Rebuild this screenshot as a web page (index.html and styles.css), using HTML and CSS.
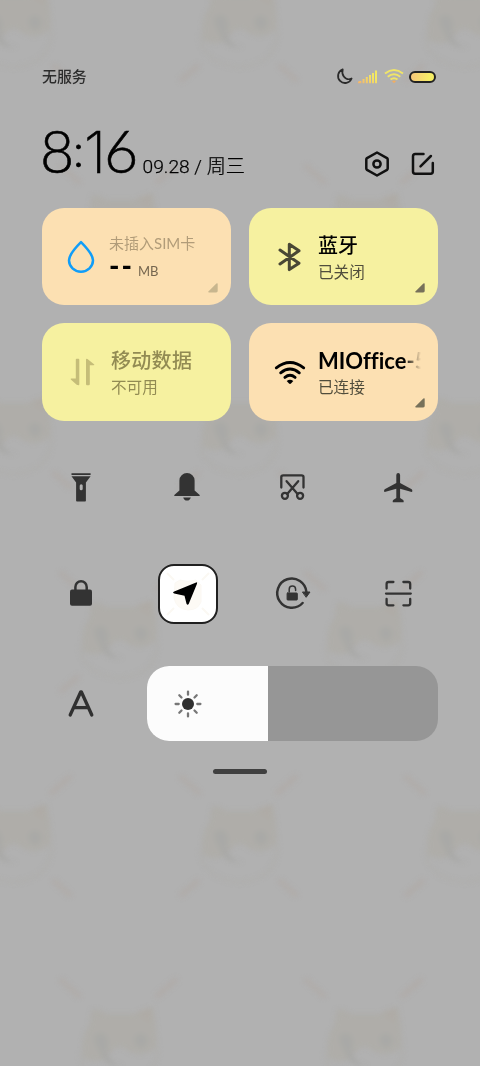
FILE: index.html
```html
<!DOCTYPE html>
<html lang="zh-CN">
<head>
<meta charset="utf-8">
<title>控制中心</title>
<link rel="stylesheet" href="styles.css">
</head>
<body>
<svg class="wallpaper" viewBox="0 0 480 1066" aria-hidden="true">
  <defs>
    <g id="cat">
      <path class="fur" d="M-28-34Q-20-34-14-29H14Q24-35 33-36Q37-15 37 4Q22 16 8 8Q0 0-8 8Q-20 24-37 15Q-40-6-31-17Z"/>
      <path class="chin" d="M-40 10Q-37 40 0 42Q36 40 38 5"/>
      <path class="ear" d="M17-29L31-35V-20Z"/>
      <path class="eye" d="M-25-7Q-18-13-13-5L-12 12Q-8 22 4 22Q-17 25-20 8Q-26 0-25-7ZM15-6Q21-12 27-5Q27 3 21 5Q14 2 15-6Z"/>
      <path class="rays" d="M-60-64L-40-46M57-64L36-46M-60 56L-41 40M57 56L39 40"/>
    </g>
    <g id="row-a"><use href="#cat" x="14"/><use href="#cat" x="240"/><use href="#cat" x="465"/></g>
    <g id="row-b"><use href="#cat" x="120"/><use href="#cat" x="365"/></g>
  </defs>
  <g class="cats">
    <use href="#row-a" y="25"/><use href="#row-b" y="229"/><use href="#row-a" y="432"/>
    <use href="#row-b" y="636"/><use href="#row-a" y="840"/><use href="#row-b" y="1043"/>
  </g>
</svg>
<main class="panel">
  <div class="status">
    <span class="carrier">无服务</span>
    <div class="status-icons">
      <svg class="moon" width="17" height="17" viewBox="0 0 17 17"><path d="M6.7 1.4A7 7 0 1 0 15.6 10.5C12.7 12 9.5 11 7.8 8.6C6.3 6.4 6 3.6 6.7 1.4Z"/></svg>
      <svg class="signal" width="20" height="14" viewBox="0 0 20 14">
        <defs><linearGradient id="warm" x1="0" y1="1" x2="1" y2="0"><stop offset="0" stop-color="#f5b36c"/><stop offset=".65" stop-color="#f3e862"/></linearGradient></defs>
        <path fill="url(#warm)" d="M1 11h2.3v2.2H0V12ZM4.5 9h2v4.2h-2ZM7.8 7h2v6.2h-2ZM11 5h2v8.2h-2ZM14 3h2v10.2h-2ZM17 .5h2v12.7h-2Z"/>
      </svg>
      <svg class="wifi-small" width="20" height="15" viewBox="0 0 20 15"><path d="M1 4.5Q10-2.5 19 4.5M3.7 7.7Q10 2.7 16.3 7.7M6.5 10.5Q10 7.8 13.5 10.5"/><path class="wifi-dot" d="M7.9 12.1Q10 10.7 12.1 12.1L10 14.3Z"/></svg>
      <span class="battery"></span>
    </div>
  </div>

  <header class="header">
    <div class="clock">
      <span class="time"><span class="eight">8</span><span class="colon">:</span><span class="one">1</span><span class="six">6</span></span>
      <span class="date">09.28 / 周三</span>
    </div>
    <div class="actions">
      <svg width="26" height="28" viewBox="0 0 26 28"><path d="M13 2.5L23 8.1Q23.7 8.6 23.7 9.4V18.6Q23.7 19.4 23 19.9L13 25.5L3 19.9Q2.3 19.4 2.3 18.6V9.4Q2.3 8.6 3 8.1Z"/><circle cx="13" cy="14" r="3.6"/></svg>
      <svg width="24" height="24" viewBox="0 0 24 24"><path d="M12.5 2.1H4.2Q2 2.1 2 4.3V19.6Q2 21.8 4.2 21.8H19.6Q21.8 21.8 21.8 19.6V11M19.9 4L9.5 14.3"/></svg>
    </div>
  </header>

  <section class="tiles">
    <article class="tile peach sim">
      <svg class="tile-icon" width="40" height="40" viewBox="0 0 40 40"><path class="drop" d="M20 5.2Q8 17.2 8 23.3A12 11.4 0 0 0 32 23.3Q32 17.2 20 5.2Z"/></svg>
      <div class="copy"><div class="title">未插入SIM卡</div><div class="usage"><b>--</b><small>MB</small></div></div>
      <svg class="corner" width="10" height="10" viewBox="0 0 10 10"><path d="M8.4.4Q9.7-.2 9.7 1V8Q9.7 9.4 8.2 9.4H1Q-.3 9.2.6 8.2Z"/></svg>
    </article>
    <article class="tile yellow bluetooth">
      <svg class="tile-icon" width="40" height="40" viewBox="0 0 40 40"><path class="bt" d="M10 13.1L29 26.2L19.3 32.6V7.2L29 13.8L10 27"/></svg>
      <div class="copy"><div class="title">蓝牙</div><div class="subtitle">已关闭</div></div>
      <svg class="corner" width="10" height="10" viewBox="0 0 10 10"><path d="M8.4.4Q9.7-.2 9.7 1V8Q9.7 9.4 8.2 9.4H1Q-.3 9.2.6 8.2Z"/></svg>
    </article>
    <article class="tile yellow mobile">
      <svg class="tile-icon" width="40" height="40" viewBox="0 0 40 40"><path class="data" d="M14.8 7.6Q14.8 6.8 15.6 6.8H17.4Q18.3 6.8 18.3 7.8V32.3Q18.3 33.8 16.8 33H16L9.8 27.6Q9.2 26.5 10.5 26.5H14.8ZM25 7.5Q25.2 6.2 26.5 7L33 12.2Q34 13.3 32.5 13.3H28.8V32Q28.8 33.2 27.8 33.2H26Q25 33.2 25 32Z"/></svg>
      <div class="copy"><div class="title">移动数据</div><div class="subtitle">不可用</div></div>
    </article>
    <article class="tile peach wlan">
      <svg class="tile-icon" width="40" height="40" viewBox="0 0 40 40"><path class="wifi" d="M6.3 15.8Q20 5.2 33.7 15.8M10.7 20.8Q20 13.4 29.3 20.8M14.9 25.4Q20 21.3 25.1 25.4"/><path d="M16.7 28.9Q20 26.4 23.3 28.9L21 31.6Q20 32.5 19 31.6Z"/></svg>
      <div class="copy"><div class="title network">MIOffice-5G</div><div class="subtitle">已连接</div></div>
      <svg class="corner" width="10" height="10" viewBox="0 0 10 10"><path d="M8.4.4Q9.7-.2 9.7 1V8Q9.7 9.4 8.2 9.4H1Q-.3 9.2.6 8.2Z"/></svg>
    </article>
  </section>

  <section class="toggles">
    <button class="toggle" aria-label="手电筒"><svg width="36" height="36" viewBox="0 0 36 36"><path d="M8.5 3.2H27.6V5H8.5ZM8.5 6.3H27.6L22.9 12.4V30.7Q22.9 31.5 22.1 31.5H14Q13.1 31.5 13.1 30.7V12.4Z"/><rect class="hole" x="16.7" y="14.2" width="3" height="6" rx="1.5"/></svg></button>
    <button class="toggle" aria-label="静音"><svg width="36" height="36" viewBox="0 0 36 36"><path d="M10.4 20.5V10.5A7.6 7.4 0 0 1 25.6 10.5V20.5L30.7 24.9Q31 26.1 30 26.1H6Q5 26.1 5.3 24.9ZM14.2 27.5H21.8Q21 30.6 18 30.6Q15 30.6 14.2 27.5Z"/></svg></button>
    <button class="toggle" aria-label="截屏"><svg class="line" width="36" height="36" viewBox="0 0 36 36"><path d="M7.3 17.5V7Q7.3 5.3 9.3 5.3H27.5Q29.5 5.3 29.5 7V17.5M12.6 11.2L23.6 24M24.2 11.2L13.2 24"/><circle cx="10.9" cy="25.8" r="3"/><circle cx="26.1" cy="25.8" r="3"/></svg></button>
    <button class="toggle" aria-label="飞行模式"><svg width="36" height="36" viewBox="0 0 36 36"><path d="M16.3 5Q16.4 3 18.2 3Q20 3 20.1 5V13L31.7 19.3Q32.6 20.2 32.3 21.6L31.7 22L20.1 18.8V28L23.2 30Q24 31 23.6 32.2H12.8Q12.4 31 13.2 30L16.3 28V18.8L4.7 22L4.1 21.6Q3.8 20.2 4.7 19.3L16.3 13Z"/></svg></button>
    <button class="toggle" aria-label="锁屏"><svg width="36" height="36" viewBox="0 0 36 36"><path d="M12.4 14V11A5.6 5.7 0 0 1 23.7 11V14" fill="none" stroke="#333" stroke-width="2.5"/><rect x="7" y="13.4" width="22" height="16.3" rx="2"/></svg></button>
    <button class="toggle active" aria-label="位置信息"><svg width="56" height="56" viewBox="2 2 56 56"><g class="mini-cat"><path d="M17 19L22 16Q29 19 38 16L43 21V38Q40 46 30 46Q18 45 16 34Z"/><path class="mini-rays" d="M9 9L16 16M51 9L44 16M9 51L16 44M51 51L44 44"/></g><path class="arrow" d="M37.5 18.7Q40 17.2 38.8 20.2L30.8 39.7Q29.6 41.9 28.5 39.7L26.5 31.7L16.2 29.5Q14 28.5 16.2 27.4Z"/></svg></button>
    <button class="toggle" aria-label="方向锁定"><svg class="line ring" width="36" height="36" viewBox="0 0 36 36"><path d="M28.6 27A14.6 14.6 0 1 1 32.4 16"/><path class="solid" d="M28.8 16H36L32.4 21Z"/><rect class="solid" x="13.1" y="17" width="10.2" height="7" rx=".6"/><path class="thin" d="M15.2 16V13.3A3.2 3.2 0 0 1 21.6 13.3V14.4"/></svg></button>
    <button class="toggle" aria-label="扫一扫"><svg class="line" width="36" height="36" viewBox="0 0 36 36"><path d="M6.6 12.6V8Q6.6 6 8.6 6H13.4M23.4 6H28.2Q30.2 6 30.2 8V12.6M6.6 23V27.3Q6.6 29.3 8.6 29.3H13.4M23.4 29.3H28.2Q30.2 29.3 30.2 27.3V23M6 17.6H30.8"/></svg></button>
  </section>

  <section class="brightness">
    <svg class="auto" width="28" height="30" viewBox="0 0 28 30"><path d="M3.2 26L13.8 2.8H14.3L24.8 26M6.8 18.6H21.2"/></svg>
    <div class="slider"><div class="fill">
      <svg width="30" height="30" viewBox="0 0 30 30"><circle cx="15" cy="15" r="6"/><path d="M15 2.6V5.7M15 24.3V27.4M2.6 15H5.7M24.3 15H27.4M6.3 6.3L8.5 8.5M21.5 21.5L23.7 23.7M6.3 23.7L8.5 21.5M21.5 8.5L23.7 6.3"/></svg>
    </div></div>
  </section>
  <div class="handle"></div>
</main>
</body>
</html>
```
FILE: styles.css
```css
* { box-sizing: border-box; }
body {
  margin: 0;
  width: 480px;
  height: 1066px;
  overflow: hidden;
  position: relative;
  background: #b1b1b1;
  color: #000;
  font-family: Lato, "Noto Sans CJK SC", sans-serif;
}
svg { display: block; flex: none; }
.wallpaper { position: absolute; inset: 0; width: 480px; height: 1066px; }
.cats { filter: blur(2.6px); opacity: .72; }
.fur { fill: #aeaca6; }
.ear { fill: #aea9a2; }
.chin { fill: none; stroke: #aeada9; stroke-width: 2; }
.eye { fill: #a6a6a3; }
.rays { fill: none; stroke: #b0aaa6; stroke-width: 5; }
.panel {
  position: relative;
  display: flex;
  flex-direction: column;
  height: 1066px;
  padding: 64px 42px 0;
}
.status { display: flex; justify-content: space-between; align-items: center; height: 24px; }
.carrier { font: 500 14.9px/24px "Noto Sans CJK SC", sans-serif; color: #2c2c2c; }
.status-icons { display: flex; align-items: center; gap: 5px; padding: 1px 2.5px 0 0; }
.moon { fill: none; stroke: #2b2b2b; stroke-width: 1.8; stroke-linejoin: round; }
.signal { margin-right: 1px; }
.wifi-small { fill: none; stroke: #f1e568; stroke-width: 1.9; }
.wifi-small .wifi-dot { fill: #f3ad60; stroke: none; }
.battery {
  width: 27px;
  height: 12px;
  border: 2px solid #222;
  border-radius: 6px;
  background: linear-gradient(100deg, #f8c77b, #f5ed66 80%);
}
.header { display: flex; justify-content: space-between; height: 119.5px; }
.clock { display: flex; align-items: baseline; height: 82px; padding-top: 28px; }
.time { display: flex; align-items: baseline; height: 70px; font: 200 58px/70px Inter, sans-serif; -webkit-text-stroke: .6px #000; }
.eight { width: 34px; font-family: Lato, sans-serif; font-weight: 300; font-size: 59px; margin-left: -2px; }
.colon { width: 10px; font: 300 46px/60px Lato, sans-serif; transform: translate(-1px, -6px); }
.one { width: 20px; }
.six { width: 34px; font-family: Lato, sans-serif; font-weight: 300; font-size: 59px; }
.date { margin-left: 4.5px; font: 300 19.2px/28px Roboto, "Noto Sans CJK SC", sans-serif; -webkit-text-stroke: .25px #000; white-space: nowrap; }
.actions { display: flex; align-items: center; gap: 21px; height: 28px; margin: 61.5px 3px 0 0; }
.actions svg { fill: none; stroke: #111; stroke-width: 2.5; stroke-linejoin: round; stroke-linecap: round; }
.tiles { display: grid; grid-template-columns: 189px 189px; grid-auto-rows: 97.5px; gap: 18px; }
.tile { position: relative; display: flex; border-radius: 22px; padding: 29px 17px 0 19px; }
.peach { background: #fce0b2; }
.yellow { background: #f6f1a0; }
.tile-icon { margin-right: 10px; }
.bluetooth .tile-icon, .wlan .tile-icon { margin-left: 1.5px; margin-right: 8.5px; }
.copy { min-width: 0; width: 104px; margin-top: -5.5px; white-space: nowrap; }
.title { height: 29px; line-height: 29px; font-size: 20px; font-weight: 500; }
.subtitle { font-size: 15.6px; line-height: 24px; color: #504d3c; }
.mobile .copy, .wlan .copy { margin-top: -6px; }
.drop { fill: none; stroke: #109df8; stroke-width: 2.5; stroke-linejoin: round; }
.bt { fill: none; stroke: #494735; stroke-width: 3; stroke-linecap: round; stroke-linejoin: round; }
.data { fill: #c5bd78; }
.wifi { fill: none; stroke: #000; stroke-width: 2.9; stroke-linecap: round; }
.corner { position: absolute; right: 13px; bottom: 12.5px; fill: #77715a; }
.sim .corner { fill: #c8b68e; }
.sim .tile-icon { margin-right: 8px; }
.sim .title { height: 22px; line-height: 24px; font-size: 15px; font-weight: 400; color: #b19c79; }
.usage { display: flex; align-items: baseline; line-height: 27px; }
.usage b { width: 29px; font: 900 28px/25px Lato, sans-serif; letter-spacing: 2px; }
.usage small { font-size: 13px; color: #75664f; }
.mobile .title { color: #928b53; letter-spacing: .3px; }
.mobile .subtitle { color: #928b53; }
.network {
  width: 104px;
  overflow: hidden;
  font-size: 22px;
  font-weight: 700;
  font-variant-ligatures: none;
  mask-image: linear-gradient(90deg, #000 83%, transparent 99%);
}
.toggles {
  display: grid;
  grid-template-columns: repeat(4, 60px);
  grid-auto-rows: 60px;
  column-gap: 45.7px;
  row-gap: 46px;
  margin: 37px 0 0 9px;
}
.toggle { display: grid; place-items: center; padding: 0; border: 0; background: none; fill: #333; }
.line { fill: none; stroke: #333; stroke-width: 2.3; stroke-linecap: round; stroke-linejoin: round; }
.ring { overflow: visible; stroke-width: 2.5; }
.hole { fill: #b1b1b1; }
.solid { fill: #333; stroke: #333; stroke-width: 1; }
.thin { stroke-width: 1.5; }
.toggle.active { border: 2px solid #202020; border-radius: 16px; background: #fff; overflow: hidden; margin-left: 1px; margin-right: -1px; }
.arrow { fill: #000; }
.mini-cat { fill: #fdfaf5; stroke: #fbf8f3; }
.mini-rays { stroke-width: 2; }
.brightness { display: flex; align-items: center; height: 75px; margin-top: 42.5px; }
.auto { margin: 0 52px 0 25px; fill: none; stroke: #303030; stroke-width: 3.3; stroke-linecap: round; stroke-linejoin: round; }
.slider { width: 291px; height: 75px; border-radius: 22px; overflow: hidden; background: #969696; }
.fill { display: flex; align-items: center; width: 121px; height: 75px; padding-left: 26px; background: #fcfcfc; }
.fill svg { fill: #303030; stroke: #777; stroke-width: 2.3; stroke-linecap: round; }
.fill circle { stroke: none; }
.handle { width: 54px; height: 5px; margin: 28px auto 0; border-radius: 3px; background: #404040; }
```
